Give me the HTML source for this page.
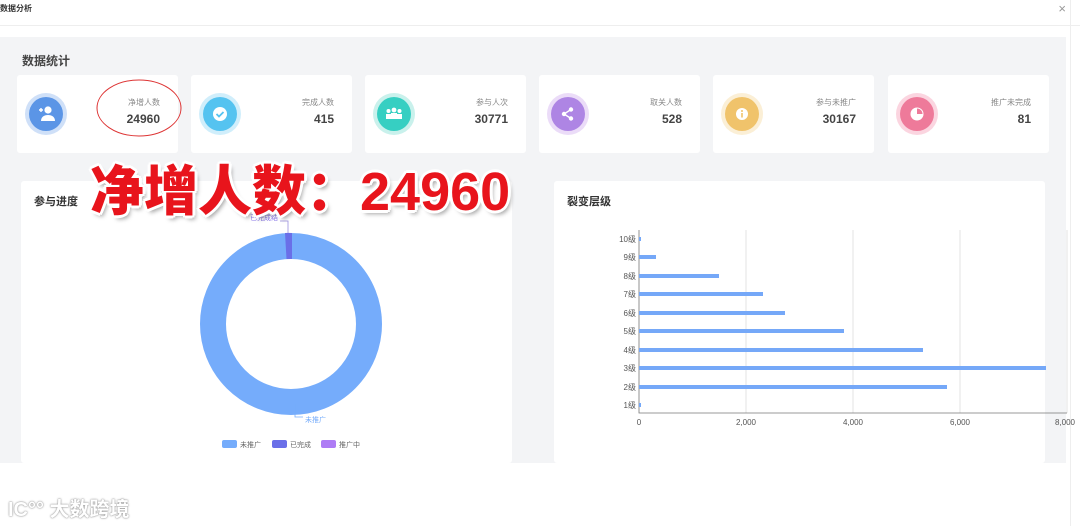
<!DOCTYPE html><html><head><meta charset="utf-8"><style>
*{margin:0;padding:0;box-sizing:border-box}
body{width:1080px;height:526px;background:#fff;font-family:"Liberation Sans","Noto Sans CJK SC",sans-serif;position:relative;overflow:hidden;color:#333}
.abs{position:absolute}
.card{position:absolute;top:75px;width:161px;height:78px;background:#fff;border-radius:3px}
.ic{position:absolute;left:8px;top:18px;width:42px;height:42px;border-radius:50%}
.ic i{position:absolute;left:4px;top:4px;width:34px;height:34px;border-radius:50%}
.lb{position:absolute;right:18px;top:22px;font-size:8px;color:#888}
.vl{position:absolute;right:18px;top:37px;font-size:12px;font-weight:bold;color:#444}
.panel{position:absolute;top:181px;width:491px;height:282px;background:#fff;border-radius:3px}
.pt{position:absolute;left:13px;top:12px;font-size:11px;font-weight:bold;color:#333}
.big{position:absolute;left:90px;top:147px;font-size:54px;font-weight:900;color:#e8141c;text-shadow:3px 0 #fff,-3px 0 #fff,0 3px #fff,0 -3px #fff,2px 2px #fff,-2px -2px #fff,2px -2px #fff,-2px 2px #fff,3px 4px 4px rgba(0,0,0,.35);white-space:nowrap}
</style></head><body>
<div class="abs" style="left:0;top:3px;font-size:8px;font-weight:bold;color:#333">数据分析</div>
<div class="abs" style="right:14px;top:1px;font-size:13px;color:#999">×</div>
<div class="abs" style="left:0;top:25px;width:1080px;height:1px;background:#eee"></div>
<div class="abs" style="left:0;top:37px;width:1066px;height:426px;background:#f3f4f6"></div>
<div class="abs" style="left:1070px;top:0;width:1px;height:526px;background:#eee"></div>
<div class="abs" style="left:22px;top:52px;font-size:12px;font-weight:bold;color:#444">数据统计</div>

<div class="card" style="left:17px"><div class="ic" style="background:#cfe0f8"><i style="background:#5b95e6"></i></div>
<svg class="abs" style="left:19px;top:29px" width="20" height="20" viewBox="0 0 20 20" fill="#fff"><circle cx="12" cy="6" r="3.6"/><path d="M5 17c0-4 3-6 7-6s7 2 7 6z"/><path d="M3 6h4M5 4v4" stroke="#fff" stroke-width="1.4"/></svg>
<div class="lb">净增人数</div><div class="vl">24960</div></div>
<div class="card" style="left:191px"><div class="ic" style="background:#d0eefb"><i style="background:#55c3f0"></i></div>
<svg class="abs" style="left:20px;top:30px" width="18" height="18"><circle cx="9" cy="9" r="7" fill="#fff"/><path d="M5.5 9l2.5 2.5 4.5-4.5" stroke="#55c3f0" stroke-width="1.8" fill="none"/></svg>
<div class="lb">完成人数</div><div class="vl">415</div></div>
<div class="card" style="left:365px"><div class="ic" style="background:#c9f1ec"><i style="background:#36cfc2"></i></div>
<svg class="abs" style="left:19px;top:31px" width="20" height="16" fill="#fff"><circle cx="10" cy="4" r="2.4"/><circle cx="4.5" cy="5" r="2"/><circle cx="15.5" cy="5" r="2"/><rect x="7" y="7" width="6" height="6"/><rect x="2" y="8" width="5" height="5"/><rect x="13" y="8" width="5" height="5"/></svg>
<div class="lb">参与人次</div><div class="vl">30771</div></div>
<div class="card" style="left:539px"><div class="ic" style="background:#ebdcf8"><i style="background:#ae85e4"></i></div>
<svg class="abs" style="left:20px;top:30px" width="18" height="18" fill="#fff"><circle cx="12" cy="4.5" r="2.2"/><circle cx="5" cy="9" r="2.2"/><circle cx="12" cy="13.5" r="2.2"/><path d="M12 4.5L5 9l7 4.5" stroke="#fff" stroke-width="1.4" fill="none"/></svg>
<div class="lb">取关人数</div><div class="vl">528</div></div>
<div class="card" style="left:713px"><div class="ic" style="background:#fbefd6"><i style="background:#f0c36b"></i></div>
<svg class="abs" style="left:20px;top:30px" width="18" height="18"><circle cx="9" cy="9" r="6" fill="#fff"/><rect x="8.2" y="8" width="1.6" height="4.5" fill="#f0c36b"/><circle cx="9" cy="6" r="1" fill="#f0c36b"/></svg>
<div class="lb">参与未推广</div><div class="vl">30167</div></div>
<div class="card" style="left:888px"><div class="ic" style="background:#fbd5e0"><i style="background:#ee7a9a"></i></div>
<svg class="abs" style="left:20px;top:30px" width="18" height="18"><circle cx="9" cy="9" r="6.5" fill="#fff"/><path d="M9 9V3.5A5.5 5.5 0 0 1 14.5 9z" fill="#ee7a9a"/></svg>
<div class="lb">推广未完成</div><div class="vl">81</div></div>

<svg class="abs" style="left:96px;top:79px" width="88" height="60"><ellipse cx="43" cy="29" rx="42" ry="28" fill="none" stroke="#d33" stroke-width="1"/></svg>

<div class="panel" style="left:21px"><div class="pt">参与进度</div>
<svg class="abs" style="left:0;top:0" width="491" height="282">
<circle cx="270" cy="143" r="78" fill="none" stroke="#75acfb" stroke-width="26"/>
<path d="M264 52 A91 91 0 0 1 271 52 L271 78 A65 65 0 0 0 265.5 78 Z" fill="#6a6fe8"/>
<path d="M267 52v-12h-8" stroke="#9a8ee0" fill="none" stroke-width=".8"/>
<text x="229" y="39" font-size="7" fill="#8a78e8">已完成结</text>
<path d="M274 223v13h8" stroke="#75acfb" fill="none" stroke-width=".8"/>
<text x="284" y="241" font-size="7" fill="#75acfb">未推广</text>
<rect x="201" y="259" width="15" height="8" rx="2" fill="#75acfb"/><text x="219" y="266" font-size="7" fill="#666">未推广</text>
<rect x="251" y="259" width="15" height="8" rx="2" fill="#6a6fe8"/><text x="269" y="266" font-size="7" fill="#666">已完成</text>
<rect x="300" y="259" width="15" height="8" rx="2" fill="#ae7cf5"/><text x="318" y="266" font-size="7" fill="#666">推广中</text>
</svg></div>

<div class="panel" style="left:554px"><div class="pt">裂变层级</div></div>
<svg class="abs" style="left:600px;top:220px" width="480" height="215" font-family="Liberation Sans,Noto Sans CJK SC,sans-serif">
<g stroke="#ddd" stroke-width=".8"><path d="M146 10V193M253 10V193M360 10V193M467 10V193"/></g>
<path d="M39 10V193H467" stroke="#777" fill="none" stroke-width=".8"/>
<g fill="#75a8f8">
<rect x="39" y="17" width="2" height="4"/><rect x="39" y="35" width="17" height="4"/><rect x="39" y="54" width="80" height="4"/><rect x="39" y="72" width="124" height="4"/><rect x="39" y="91" width="146" height="4"/><rect x="39" y="109" width="205" height="4"/><rect x="39" y="128" width="284" height="4"/><rect x="39" y="146" width="407" height="4"/><rect x="39" y="165" width="308" height="4"/><rect x="39" y="183" width="2" height="4"/>
</g>
<g font-size="8" fill="#555" text-anchor="end"><text x="36" y="22">10级</text><text x="36" y="40">9级</text><text x="36" y="59">8级</text><text x="36" y="77">7级</text><text x="36" y="96">6级</text><text x="36" y="114">5级</text><text x="36" y="133">4级</text><text x="36" y="151">3级</text><text x="36" y="170">2级</text><text x="36" y="188">1级</text></g>
<g font-size="8" fill="#555" text-anchor="middle"><text x="39" y="205">0</text><text x="146" y="205">2,000</text><text x="253" y="205">4,000</text><text x="360" y="205">6,000</text><text x="465" y="205">8,000</text></g>
</svg>

<div class="big">净增人数：24960</div>
<div class="abs" style="left:8px;top:493px;font-size:20px;font-weight:bold;color:#fff;text-shadow:0 0 2px #999,0 0 1px #888">IC°° 大数跨境</div>
</body></html>
